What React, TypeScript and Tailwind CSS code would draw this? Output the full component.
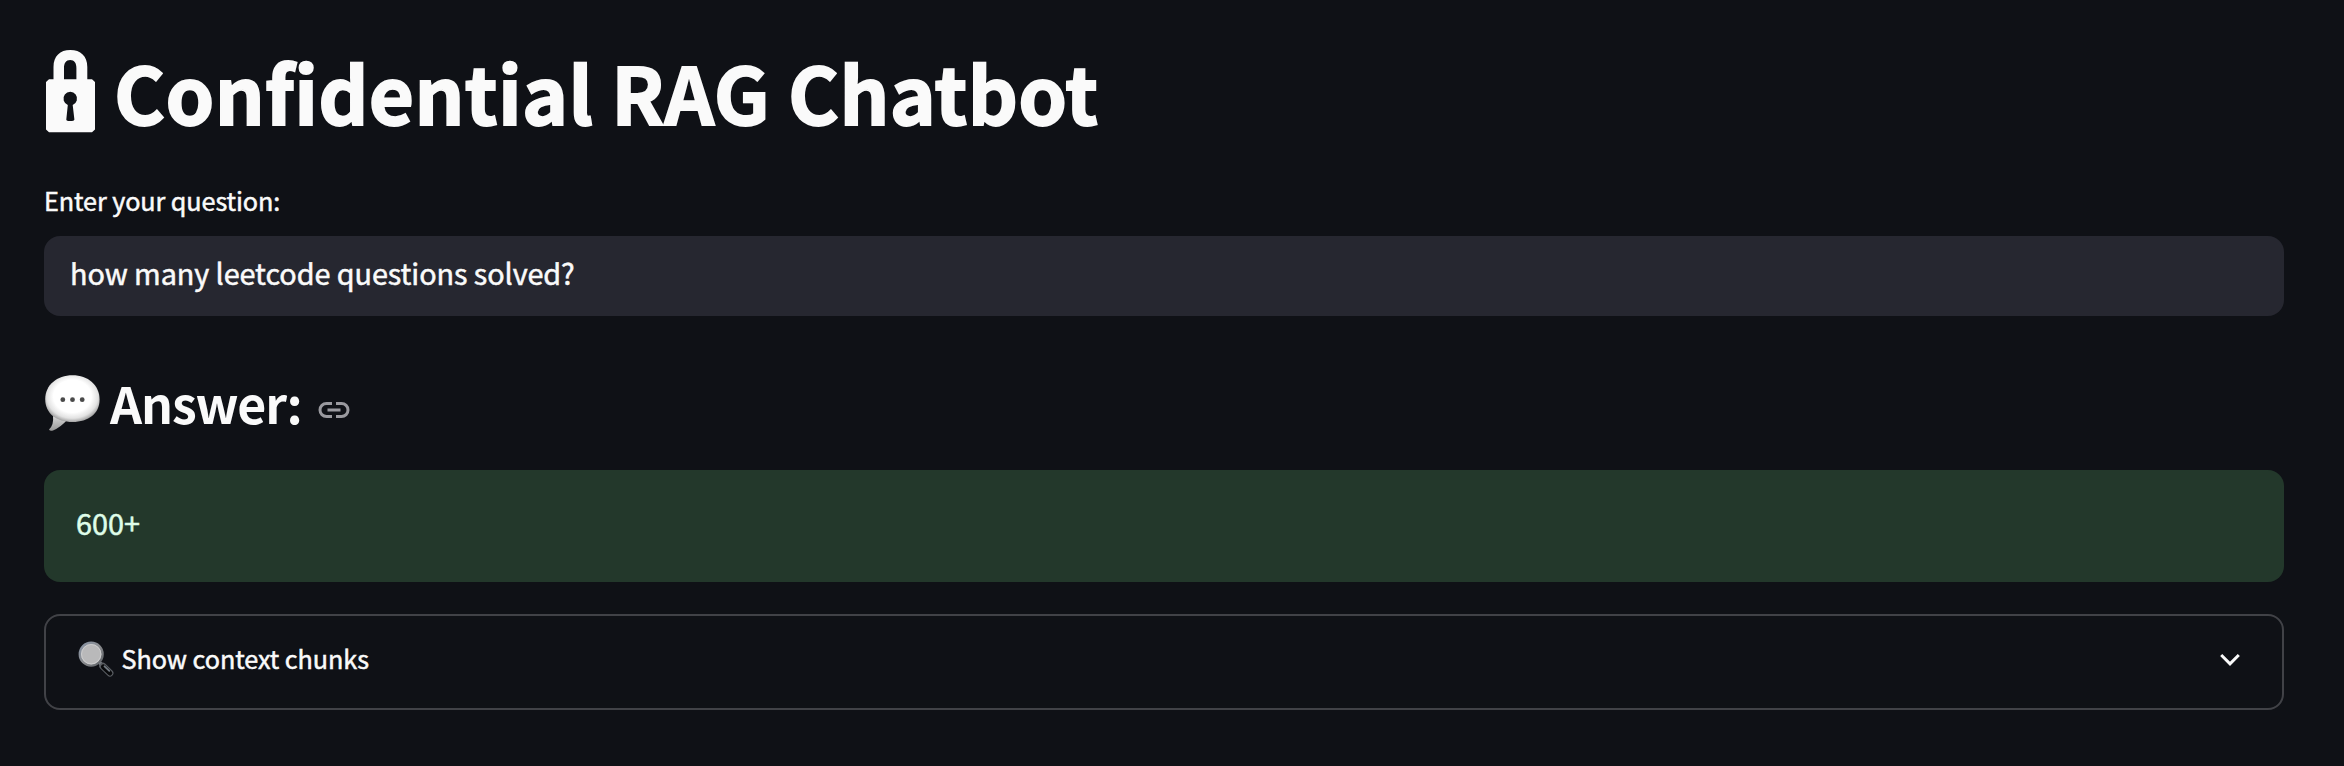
import React from "react";

function LockIcon() {
  return (
    <svg width="52" height="84" viewBox="44 49 52 84" className="shrink-0" fill="#fafafa">
      <path
        fillRule="evenodd"
        d="M53.5 79.3V67C53.5 56 60 50 70.3 50S87.3 56 87.3 67V79.3H92L95 82V129.6L92 132.3H49L46 129.6V82L49 79.3ZM64 79.3H76.4V68C76.4 63 74.4 60 70.2 60S64 63 64 68ZM67.8 105L66.3 119.5Q66.3 121 70.2 121T74.4 119.5L72.7 105A6.8 6.8 0 1 0 67.8 105Z"
      />
    </svg>
  );
}

function SpeechIcon() {
  return (
    <svg width="56" height="58" viewBox="44 374 56 58" className="mt-[2px] shrink-0">
      <defs>
        <radialGradient id="bubble" cx="0.5" cy="0.45" r="0.56">
          <stop offset="0.62" stopColor="#ffffff" />
          <stop offset="0.84" stopColor="#e2e2e2" />
          <stop offset="1" stopColor="#9c9c9c" />
        </radialGradient>
        <linearGradient id="tail" x1="0" y1="0" x2="0" y2="1">
          <stop offset="0" stopColor="#d8d8d8" />
          <stop offset="1" stopColor="#969696" />
        </linearGradient>
      </defs>
      <path d="M53 416Q54 425 49 429.500Q50 431.500 53 430.500Q61 427 67 420Z" fill="url(#tail)" />
      <path
        d="M72.500 375.200C88 375.200 99.600 385 99.600 399.500C99.600 413.500 88.500 422 72.500 422C56.500 422 45.200 413.500 45.200 399C45.200 385 57 375.200 72.500 375.200Z"
        fill="url(#bubble)"
      />
      <g fill="#4a4a4a">
        <circle cx="62.800" cy="399.700" r="2.400" />
        <circle cx="72.500" cy="399.700" r="2.400" />
        <circle cx="82.200" cy="399.700" r="2.400" />
      </g>
    </svg>
  );
}

function LinkIcon() {
  return (
    <svg width="32" height="18" viewBox="0 0 32 18" fill="none" stroke="#9a9a9f" strokeWidth="3" className="mt-[16px] shrink-0">
      <path d="M14 2.500H8.500A6.500 6.500 0 0 0 8.500 15.500H14M18 2.500H23.500A6.500 6.500 0 0 1 23.500 15.500H18M9.500 9H22.500" />
    </svg>
  );
}

function MagnifierIcon() {
  return (
    <svg width="36" height="36" viewBox="78.500 641.500 36 36" className="shrink-0">
      <defs>
        <linearGradient id="rim" x1="0" y1="0" x2="1" y2="1">
          <stop offset="0" stopColor="#8793a5" />
          <stop offset="0.5" stopColor="#8b8d90" />
          <stop offset="1" stopColor="#5b5f64" />
        </linearGradient>
      </defs>
      <path d="M99.500 662.500L104 667" stroke="#85898e" strokeWidth="3.400" />
      <path d="M103.200 666.600L110.400 673.600" stroke="#5a5e63" strokeWidth="7" strokeLinecap="round" />
      <path d="M103.800 667.200L110.400 673.600" stroke="#08090b" strokeWidth="4.800" strokeLinecap="round" />
      <path d="M105 666.800L109.800 671.300" stroke="#747c84" strokeWidth="1.800" strokeLinecap="round" />
      <circle cx="91.700" cy="654.700" r="11.400" fill="#b9b9ba" stroke="url(#rim)" strokeWidth="2.400" />
      <circle cx="91.700" cy="654.700" r="9.700" fill="none" stroke="#d3d3d4" strokeWidth="0.800" />
    </svg>
  );
}

export default function App() {
  return (
    <main className="flex h-[766px] w-full flex-col overflow-hidden bg-[#0f1116] pt-[31px] pr-[60px] pl-[44px] font-['Noto_Sans_CJK_SC','Noto_Sans',sans-serif] text-[#fafafa]">
      <h1 className="flex h-[120px] items-center text-[78px] leading-none font-bold tracking-[0.32px] whitespace-nowrap">
        <LockIcon />
        <span className="ml-[18px] [-webkit-text-stroke:1.8px_#fafafa]">Confidential RAG Chatbot</span>
      </h1>
      <label
        htmlFor="question"
        className="mt-[30px] flex h-[40px] items-center text-[25.2px] leading-none tracking-[-0.08px] whitespace-nowrap [-webkit-text-stroke:0.5px_#fafafa]"
      >
        Enter your question:
      </label>
      <div className="mt-[15px] flex h-[80px] shrink-0 items-center rounded-[16px] bg-[#262730] px-[26px] pb-[7px]">
        <input
          id="question"
          className="h-[60px] w-full bg-transparent text-[28.8px] tracking-[-0.08px] outline-none [-webkit-text-stroke:0.5px_#fafafa]"
          defaultValue="how many leetcode questions solved?"
        />
      </div>
      <h2 className="mt-[51px] flex h-[70px] items-center text-[50px] leading-none font-bold tracking-[-1.1px] whitespace-nowrap">
        <SpeechIcon />
        <span className="mb-[1px] ml-[10px]">Answer:</span>
        <span className="ml-[16px]">
          <LinkIcon />
        </span>
      </h2>
      <div className="mt-[33px] flex h-[112px] shrink-0 items-center rounded-[16px] bg-[#23382b] px-[32px] pb-[6px] text-[28.8px] leading-none text-[#dffde9] [-webkit-text-stroke:0.5px_#dffde9]">
        600+
      </div>
      <button className="mt-[32px] flex h-[96px] shrink-0 items-center rounded-[16px] border-2 border-[#414247] pr-[42px] pb-[6px] pl-[32px] text-[25.2px] leading-none">
        <MagnifierIcon />
        <span className="mb-[1px] ml-[7.5px] tracking-[-0.06px] whitespace-nowrap [-webkit-text-stroke:0.5px_#fafafa]">
          Show context chunks
        </span>
        <svg width="20" height="14" viewBox="0 0 20 14" fill="none" stroke="#fafafa" strokeWidth="3" className="mt-[2px] ml-auto">
          <path d="M1.200 2L10 10.800L18.800 2" />
        </svg>
      </button>
    </main>
  );
}
